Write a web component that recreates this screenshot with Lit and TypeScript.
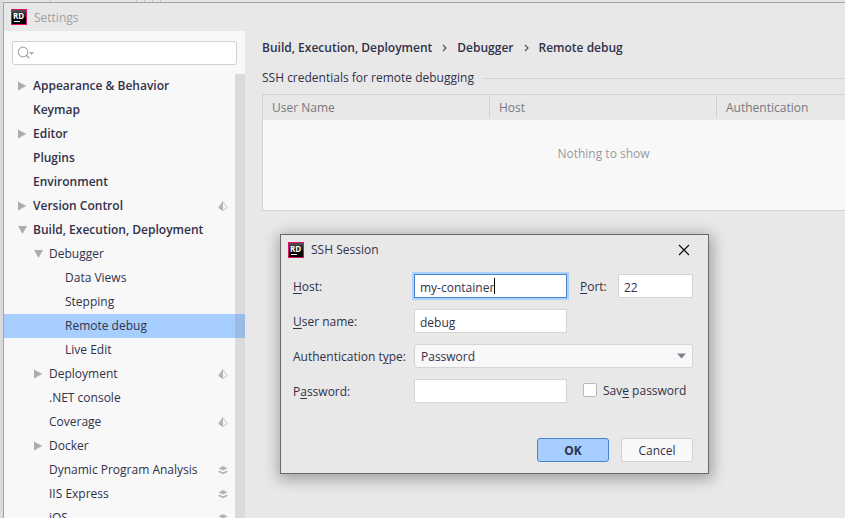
import { LitElement, html, svg, css, nothing } from "lit";
import { customElement, property } from "lit/decorators.js";

type Badge = "project" | "layers";
interface Item {
  label: string;
  level: number;
  bold?: boolean;
  arrow?: "open" | "closed";
  badge?: Badge;
  selected?: boolean;
}

const ITEMS: Item[] = [
  { label: "Appearance & Behavior", level: 0, bold: true, arrow: "closed" },
  { label: "Keymap", level: 0, bold: true },
  { label: "Editor", level: 0, bold: true, arrow: "closed" },
  { label: "Plugins", level: 0, bold: true },
  { label: "Environment", level: 0, bold: true },
  { label: "Version Control", level: 0, bold: true, arrow: "closed", badge: "project" },
  { label: "Build, Execution, Deployment", level: 0, bold: true, arrow: "open" },
  { label: "Debugger", level: 1, arrow: "open" },
  { label: "Data Views", level: 2 },
  { label: "Stepping", level: 2 },
  { label: "Remote debug", level: 2, selected: true },
  { label: "Live Edit", level: 2 },
  { label: "Deployment", level: 1, arrow: "closed", badge: "project" },
  { label: ".NET console", level: 1 },
  { label: "Coverage", level: 1, badge: "project" },
  { label: "Docker", level: 1, arrow: "closed" },
  { label: "Dynamic Program Analysis", level: 1, badge: "layers" },
  { label: "IIS Express", level: 1, badge: "layers" },
  { label: "iOS", level: 1, badge: "layers" },
];

const arrowIcon = (kind: "open" | "closed") => html`<svg width="10" height="10" viewBox="0 0 10 10" aria-hidden="true">
  ${kind === "open" ? svg`<path d="M0 1h9L4.5 9z" fill="#adadad" />` : svg`<path d="M0 0.5v9L8.3 5z" fill="#adadad" />`}
</svg>`;

const badgeIcon = (kind: Badge) =>
  kind === "project"
    ? html`<svg width="10" height="10" viewBox="0 0 10 10" aria-hidden="true">
        <path d="M5 0L0 6.8 5 10z" fill="#b4b4b8" />
        <path d="M5 0.9L9.1 6.6 5 9.3" fill="#fbfbfb" stroke="#c2c2c6" stroke-width="1" />
      </svg>`
    : html`<svg width="10" height="10" viewBox="0 0 10 10" aria-hidden="true">
        <path d="M5 1L9.5 3.3 5 5.6 0.5 3.3z" fill="#b4b4b8" />
        <path d="M0.7 6.3L5 8.3 9.3 6.3" fill="none" stroke="#b4b4b8" stroke-width="1.5" />
      </svg>`;

@customElement("rider-logo")
class RiderLogo extends LitElement {
  static styles = css`
    :host { display: block; flex: none; width: 16px; height: 16px; }
    .tile {
      box-sizing: border-box; width: 16px; height: 16px; padding: 2px 0 0 1px;
      border: 1px solid #dd1265; background: linear-gradient(#555, #000 60%);
      color: #fff; font: bold 8px/8px "Open Sans", "Noto Sans", sans-serif;
    }
    .bar { width: 6px; height: 1px; margin: 1px 0 0 1px; background: #fff; }
  `;
  render() {
    return html`<div class="tile">RD<div class="bar"></div></div>`;
  }
}

@customElement("settings-tree")
class SettingsTree extends LitElement {
  @property({ attribute: false }) items: Item[] = [];
  static styles = css`
    :host { display: flex; flex: 1; min-height: 0; overflow: hidden; position: relative; }
    .tree { flex: 1; margin: 0; padding: 0; list-style: none; }
    .row {
      display: flex; align-items: center; height: 24px; padding: 0 17px 0 14px;
      color: #31314a;
    }
    .level1 { padding-left: 30px; }
    .level2 { padding-left: 46px; }
    .bold { font-weight: 600; }
    .selected { background: #a6cfff; }
    .twist { display: flex; width: 15px; }
    .label { flex: 1; white-space: nowrap; }
    svg { display: block; }
    .scroll { position: absolute; inset: 0 0 0 auto; width: 10px; background: rgba(128, 128, 148, 0.25); }
  `;
  render() {
    return html`<ul class="tree">
        ${this.items.map(
          (i) => html`<li class="row level${i.level} ${i.bold ? "bold" : ""} ${i.selected ? "selected" : ""}">
            <span class="twist">${i.arrow ? arrowIcon(i.arrow) : nothing}</span>
            <span class="label">${i.label}</span>
            ${i.badge ? badgeIcon(i.badge) : nothing}
          </li>`,
        )}
      </ul>
      <div class="scroll"></div>`;
  }
}

@customElement("ssh-dialog")
class SshDialog extends LitElement {
  static styles = css`
    :host {
      display: block; box-sizing: border-box; border: 1px solid #696969; background: #e8e8e8;
      box-shadow: 1px 3px 14px 2px rgba(0, 0, 0, 0.33); color: #31314a;
    }
    .title { display: flex; align-items: center; height: 30px; padding: 0 18px 0 7px; gap: 7px; }
    .name { flex: 1; font: inherit; margin: 0; }
    .close { display: flex; padding: 0; border: 0; background: none; }
    .form {
      display: grid; grid-template-columns: 121px 1fr 51px 75px; grid-auto-rows: 24px; row-gap: 11px;
      align-items: center; padding: 9px 15px 0 12px;
    }
    .caption { padding-top: 2px; }
    .port { padding-left: 13px; }
    .text, .combo {
      box-sizing: border-box; width: 100%; height: 24px; margin: 0; padding: 2px 5px 0;
      border: 1px solid #d4d4d4; border-radius: 0; background: #fff; color: inherit; font: inherit; outline: 0;
    }
    .active { border-color: #4683d0; box-shadow: 0 0 0 2px #afd2fc; }
    .field { display: flex; position: relative; }
    .measure { position: absolute; left: 6px; top: 4px; height: 16px; border-right: 1px solid #000; color: transparent; pointer-events: none; }
    .wide { grid-column: 2 / -1; position: relative; display: flex; }
    .combo { appearance: none; border-radius: 3px; background: #f8f8f8; padding: 2px 6px 0; }
    .down { position: absolute; right: 7px; top: 9px; pointer-events: none; }
    .save { grid-column: 3 / -1; display: flex; align-items: center; gap: 6px; padding-left: 16px; height: 22px; align-self: start; white-space: nowrap; }
    .check { appearance: none; box-sizing: border-box; width: 14px; height: 14px; margin: 0; border: 1px solid #b8b8b8; border-radius: 2px; background: #fff; }
    .actions { display: flex; justify-content: flex-end; gap: 12px; padding: 35px 15px 11px; }
    .button {
      box-sizing: border-box; width: 72px; height: 24px; padding: 2px 0 0; border: 1px solid #d0d0d0; border-radius: 3px;
      background: #f8f8f8; color: inherit; font: inherit;
    }
    .primary { background: #a6cfff; border-color: #4683d0; font-weight: 700; }
    u { text-underline-offset: 2px; }
  `;
  render() {
    return html`<header class="title">
        <rider-logo></rider-logo>
        <h2 class="name">SSH Session</h2>
        <button class="close" aria-label="Close">
          <svg width="12" height="12" viewBox="0 0 12 12"><path d="M1 1l10 10M11 1L1 11" stroke="#111" stroke-width="1.2" /></svg>
        </button>
      </header>
      <form class="form">
        <label class="caption" for="host"><u>H</u>ost:</label>
        <div class="field">
          <input class="text active" id="host" value="my-container" />
          <span class="measure" aria-hidden="true">my-container</span>
        </div>
        <label class="caption port" for="port"><u>P</u>ort:</label>
        <input class="text" id="port" value="22" />
        <label class="caption" for="user"><u>U</u>ser name:</label>
        <input class="text" id="user" value="debug" />
        <span></span><span></span>
        <label class="caption" for="auth">Authentication t<u>y</u>pe:</label>
        <div class="wide">
          <select class="combo" id="auth"><option>Password</option></select>
          <svg class="down" width="9" height="6" viewBox="0 0 9 6"><path d="M0 0.5h9L4.5 5.5z" fill="#7f7f91" /></svg>
        </div>
        <label class="caption" for="pass">P<u>a</u>ssword:</label>
        <input class="text" id="pass" type="password" />
        <label class="save"><input class="check" type="checkbox" /><span class="caption">Sav<u>e</u> password</span></label>
      </form>
      <footer class="actions">
        <button class="button primary">OK</button>
        <button class="button">Cancel</button>
      </footer>`;
  }
}

@customElement("app-root")
class AppRoot extends LitElement {
  static styles = css`
    :host {
      display: flex; flex-direction: column; box-sizing: border-box; height: 100vh; overflow: hidden; position: relative;
      padding-left: 3px; background: #dcdcdc; color: #31314a; font: 12px/16px "Open Sans", "Noto Sans", sans-serif;
    }
    .behind { display: flex; height: 2px; background: #e4e4e4; }
    .tab { box-sizing: border-box; border-right: 1px solid #c4c4c4; width: 8px; }
    .first { width: 48px; }
    .second { width: 86px; }
    .window { flex: 1; min-height: 0; display: flex; flex-direction: column; border: solid #a3a3a3; border-width: 1px 0 0 1px; background: #e8e8e8; }
    .title { display: flex; align-items: center; gap: 7px; height: 28px; padding-left: 7px; color: #a0a0a4; }
    .name { font: inherit; margin: 0; padding-top: 2px; }
    .body { flex: 1; min-height: 0; display: flex; }
    .side { flex: none; width: 241px; display: flex; flex-direction: column; background: #f8f8f8; }
    .search { position: relative; display: flex; margin: 10px 8px 9px; }
    .query { box-sizing: border-box; width: 100%; height: 24px; margin: 0; padding: 0 8px 0 24px; border: 1px solid #d0d0d0; border-radius: 3px; background: #fff; font: inherit; outline: 0; }
    .glass { position: absolute; left: 5px; top: 5px; }
    .main { flex: 1; min-width: 0; padding: 9px 0 0 17px; overflow: hidden; }
    .crumbs { display: flex; align-items: center; gap: 10px; margin: 0; padding: 0; list-style: none; font-weight: 600; white-space: nowrap; }
    .crumb { display: flex; align-items: center; gap: 10px; }
    .crumb a { color: inherit; text-decoration: none; }
    .section { display: flex; align-items: center; gap: 9px; margin: 14px 0 8px; font: inherit; white-space: nowrap; }
    .section::after { content: ""; flex: 1; height: 1px; background: #d1d1d1; }
    .frame { margin-right: -100px; border: 1px solid #d1d1d1; }
    .grid { width: 100%; table-layout: fixed; border-collapse: collapse; background: #f8f8f8; }
    .head { height: 25px; padding: 0; background: #e8e8e8; color: #787880; font-weight: 400; text-align: left; }
    .cell { display: block; padding: 4px 9px 2px; margin-bottom: 2px; margin-top: 1px; border-right: 1px solid #d1d1d1; }
    .head:last-child .cell { border: 0; }
    .empty { height: 68px; padding: 0 0 22px; color: #999; text-align: center; }
    .dialog { position: absolute; left: 280px; top: 234px; width: 429px; }
  `;
  render() {
    const sep = html`<svg width="5" height="8" viewBox="0 0 5 8" aria-hidden="true"><path d="M1 1l3 3-3 3" fill="none" stroke="#50505f" stroke-width="1.2" /></svg>`;
    return html`
      <div class="behind">
        <div class="tab first"></div><div class="tab second"></div><div class="tab"></div><div class="tab"></div><div class="tab"></div>
      </div>
      <div class="window">
        <header class="title"><rider-logo></rider-logo><h1 class="name">Settings</h1></header>
        <div class="body">
          <aside class="side">
            <div class="search">
              <input class="query" type="search" aria-label="Search settings" />
              <svg class="glass" width="18" height="14" viewBox="0 0 18 14" aria-hidden="true">
                <circle cx="6" cy="6" r="4.8" fill="none" stroke="#adadad" stroke-width="1.2" />
                <path d="M9.3 9.3l3 3" stroke="#adadad" stroke-width="1.6" />
                <path d="M12 6h5l-2.5 3z" fill="#adadad" />
              </svg>
            </div>
            <settings-tree .items=${ITEMS}></settings-tree>
          </aside>
          <main class="main">
            <ol class="crumbs">
              <li class="crumb"><a href="#build">Build, Execution, Deployment</a>${sep}</li>
              <li class="crumb"><a href="#debugger">Debugger</a>${sep}</li>
              <li class="crumb"><a href="#remote">Remote debug</a></li>
            </ol>
            <h2 class="section">SSH credentials for remote debugging</h2>
            <div class="frame">
              <table class="grid">
                <thead><tr>
                  <th class="head"><span class="cell">User Name</span></th>
                  <th class="head"><span class="cell">Host</span></th>
                  <th class="head"><span class="cell">Authentication</span></th>
                </tr></thead>
                <tbody><tr><td class="empty" colspan="3">Nothing to show</td></tr></tbody>
              </table>
            </div>
          </main>
        </div>
      </div>
      <ssh-dialog class="dialog" role="dialog" aria-label="SSH Session"></ssh-dialog>
    `;
  }
}
